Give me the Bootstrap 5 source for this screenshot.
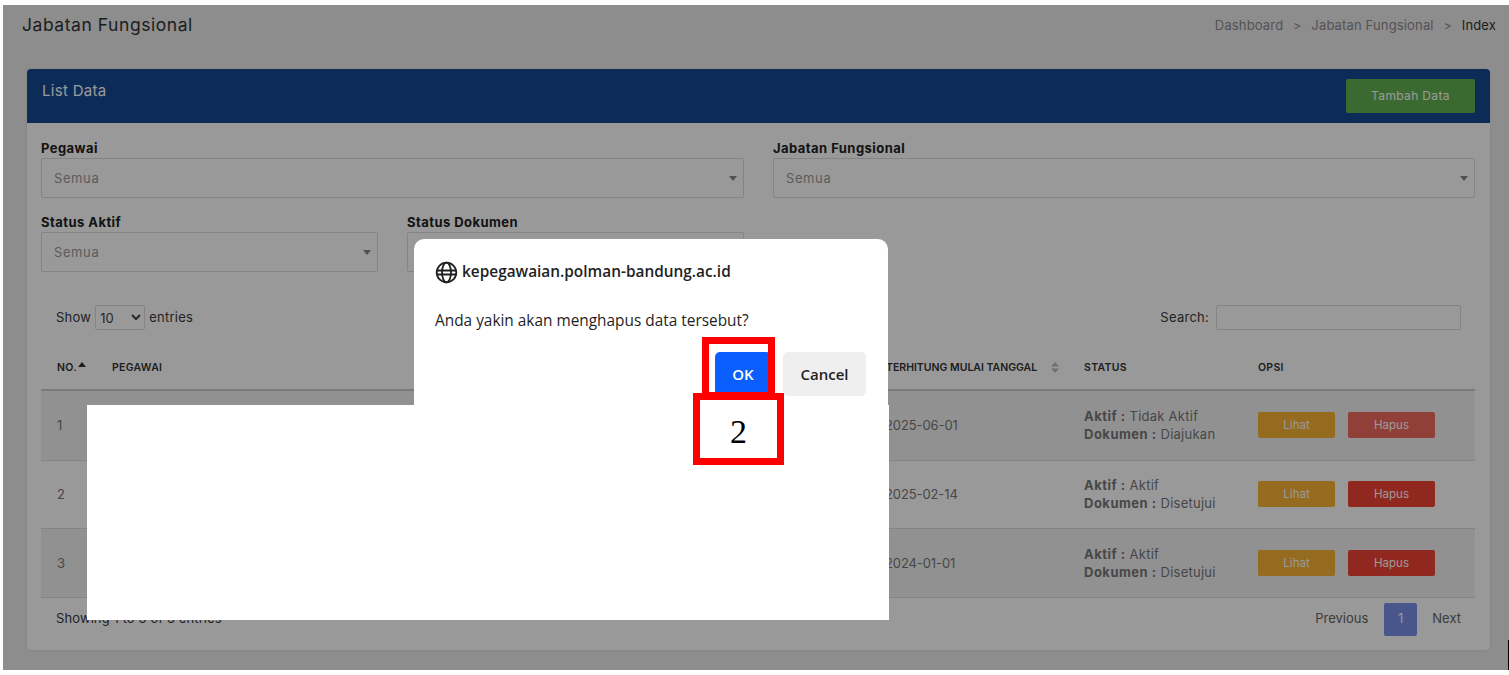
<!DOCTYPE html>
<html lang="id">
<head>
    <meta charset="UTF-8">
    <meta name="viewport" content="width=device-width, initial-scale=1.0">
    <title>Jabatan Fungsional</title>
    <link href="https://cdn.jsdelivr.net/npm/bootstrap@5.3.0/dist/css/bootstrap.min.css" rel="stylesheet">
    <style>
        body {
            background: #fff;
            font-family: "Inter", "Liberation Sans", sans-serif;
            font-size: 13px;
            letter-spacing: .25px;
            color: #3a3a3c;
            overflow: hidden;
        }
        .shot-frame {
            position: relative;
            margin: 5px 0 0 3px;
            width: 1506px;
            height: 665px;
            overflow: hidden;
            background: #ebebec;
        }
        .page-top {
            height: 64px;
            padding: 9px 13px 0 19px;
        }
        .page-heading {
            font-size: 17.5px;
            font-weight: 400;
            letter-spacing: .55px;
            color: #333;
            margin: 0;
            line-height: 21px;
        }
        .crumbs { font-size: 13px; letter-spacing: .15px; color: #8a8a8f; line-height: 21px; margin-top: 1px; }
        .crumbs .sep { margin: 0 10px; font-size: 12px; }
        .crumbs .now { color: #333; }
        .list-box {
            margin-left: 24px;
            width: 1463px;
            height: 581px;
            background: #fff;
            border-radius: 4px;
            box-shadow: 0 0 2px rgba(0,0,0,.12);
        }
        .list-head {
            height: 54px;
            background: #164891;
            border-radius: 4px 4px 0 0;
            padding: 10px 15px 0 15px;
        }
        .list-title { color: #fff; font-size: 15px; letter-spacing: .3px; line-height: 24px; }
        .btn-add {
            width: 129px;
            height: 34px;
            background: #62b150;
            color: #fff;
            font-size: 12px;
            letter-spacing: .35px;
            border: 0;
            border-radius: 2px;
        }
        .filter-area { padding: 16px 15px 0 14px; }
        .filter-grid {
            display: grid;
            grid-template-columns: 337px 337px 702px;
            column-gap: 29px;
        }
        .filter-wide { grid-column: span 2; }
        .filter-label {
            display: block;
            font-weight: 700;
            font-size: 13px;
            letter-spacing: .45px;
            line-height: 19px;
            color: #222;
        }
        .pick-box {
            position: relative;
            height: 40px;
            border: 1px solid #ddd;
            border-radius: 2px;
            color: #999;
            line-height: 38px;
            padding-left: 12px;
            margin-bottom: 15px;
            font-size: 13px;
            letter-spacing: .6px;
        }
        .pick-box::after {
            content: "";
            position: absolute;
            right: 6px;
            top: 17px;
            border: 4px solid transparent;
            border-top: 5px solid #888;
            border-bottom: 0;
        }
        .dt-bar {
            padding: 0 29px;
            height: 25px;
            margin-top: 18px;
        }
        .dt-txt { padding-top: 1px; }
        .dt-size {
            width: 50px;
            height: 25px;
            border: 1px solid #ddd;
            border-radius: 2px;
            margin: 0 4px;
            padding-left: 0;
            font-size: 13px;
            color: #444;
            background: #fff;
        }
        .dt-search {
            width: 245px;
            height: 25px;
            border: 1px solid #ddd;
            border-radius: 2px;
            margin-left: 7px;
        }
        .table-wrap { margin-left: 14px; }
        .data-table {
            table-layout: fixed;
            width: 1434px;
            margin: 12px 0 0 0;
            color: #777;
        }
        .data-table th {
            height: 48px;
            font-size: 10.5px;
            font-weight: 600;
            letter-spacing: .3px;
            color: #333;
            vertical-align: middle;
            padding: 5px 16px 0;
            border-bottom: 2px solid #ccc;
            white-space: nowrap;
        }
        .data-table th.head-date { letter-spacing: 0; }
        .data-table td {
            padding: 0 16px;
            vertical-align: middle;
            border-bottom: 1px solid #ddd;
            font-size: 13px;
            line-height: 18.5px;
        }
        .data-table td b { letter-spacing: .5px; }
        .data-table td.cell-date { letter-spacing: -.1px; padding-left: 15px; }
        .data-table tr.band td { background: #f2f2f2; }
        .data-table tr.row-h3 td { padding-top: 1px; }
        .col-no { width: 55px; }
        .col-peg { width: 392px; }
        .col-jab { width: 382px; }
        .col-tgl { width: 198px; }
        .col-sta { width: 174px; }
        .row-h1 { height: 70px; }
        .row-h2 { height: 68px; }
        .row-h3 { height: 69px; }
        .sort-up { display: inline-block; margin-left: 1px; vertical-align: 4px; }
        .sort-both { display: inline-block; margin-left: 14px; vertical-align: -2px; }
        .act-btn {
            display: inline-block;
            height: 26px;
            line-height: 26px;
            border: 0;
            padding: 0;
            font-size: 11.5px;
            color: #fff;
            text-align: center;
            border-radius: 2px;
        }
        .act-see { width: 77px; background: #f9b234; margin-right: 13px; }
        .act-del { width: 87px; background: #f14336; }
        .act-del.faded { background: #f26a5f; }
        .foot-bar { padding: 5px 29px 0; letter-spacing: .1px; }
        .page-link-txt { color: #666; font-size: 13px; letter-spacing: 0; }
        .page-one {
            width: 33px;
            height: 33px;
            margin: 0 15px 0 16px;
            background: #7a8fe8;
            color: #fff;
            border-radius: 2px;
            font-size: 13px;
        }
        .dim-layer {
            position: absolute;
            inset: 0;
            background: rgba(0,0,0,.4);
        }
        .alert-box {
            position: absolute;
            left: 411px;
            top: 234px;
            width: 474px;
            height: 190px;
            background: #fff;
            border-radius: 10px;
            padding: 21px 22px 21px 21px;
            font-family: "Open Sans", "Noto Sans", sans-serif;
            letter-spacing: 0;
            color: #1f1f1f;
        }
        .alert-origin { font-size: 15.4px; font-weight: 600; line-height: 24px; gap: 4px; }
        .alert-msg { font-size: 15.4px; margin-top: 25px; line-height: 24px; }
        .alert-actions { margin-top: 19px; }
        .alert-ok, .alert-cancel {
            height: 44px;
            border: 0;
            border-radius: 5px;
            font-weight: 600;
            font-size: 15px;
        }
        .alert-ok { width: 56px; background: #0b5fff; color: #fff; }
        .alert-cancel { width: 83px; background: #efefef; color: #1f1f1f; margin-left: 12px; }
        .blank-patch {
            position: absolute;
            left: 84px;
            top: 400px;
            width: 802px;
            height: 215px;
            background: #fff;
        }
        .mark-ok {
            position: absolute;
            left: 699px;
            top: 332px;
            width: 73px;
            height: 62px;
            border: 7px solid #f00;
        }
        .mark-num {
            position: absolute;
            left: 690px;
            top: 388px;
            width: 91px;
            height: 72px;
            border: 7px solid #f00;
            background: #fff;
            font-family: "Liberation Serif", serif;
            font-size: 34px;
            letter-spacing: 0;
            line-height: 64px;
            color: #000;
            text-align: center;
        }
        .edge-line {
            position: absolute;
            right: 0;
            top: 635px;
            width: 1px;
            height: 30px;
            background: #000;
        }
    </style>
</head>
<body>
    <div class="shot-frame">
        <div class="page-top d-flex justify-content-between">
            <h1 class="page-heading">Jabatan Fungsional</h1>
            <div class="crumbs">Dashboard<span class="sep">&gt;</span>Jabatan Fungsional<span class="sep">&gt;</span><span class="now">Index</span></div>
        </div>

        <div class="list-box">
            <div class="list-head d-flex justify-content-between">
                <div class="list-title">List Data</div>
                <button type="button" class="btn-add">Tambah Data</button>
            </div>

            <div class="filter-area">
                <div class="filter-grid">
                    <div class="filter-wide">
                        <label class="filter-label">Pegawai</label>
                        <div class="pick-box">Semua</div>
                    </div>
                    <div>
                        <label class="filter-label">Jabatan Fungsional</label>
                        <div class="pick-box">Semua</div>
                    </div>
                    <div>
                        <label class="filter-label">Status Aktif</label>
                        <div class="pick-box">Semua</div>
                    </div>
                    <div>
                        <label class="filter-label">Status Dokumen</label>
                        <div class="pick-box">Semua</div>
                    </div>
                </div>
            </div>

            <div class="dt-bar d-flex justify-content-between align-items-center">
                <div class="d-flex align-items-center"><span class="dt-txt">Show</span> <select class="dt-size"><option>10</option></select> <span class="dt-txt">entries</span></div>
                <div class="d-flex align-items-center"><span class="dt-txt">Search:</span><input type="text" class="dt-search"></div>
            </div>

            <div class="table-wrap">
                <table class="data-table">
                    <colgroup>
                        <col class="col-no"><col class="col-peg"><col class="col-jab"><col class="col-tgl"><col class="col-sta"><col>
                    </colgroup>
                    <thead>
                        <tr>
                            <th>NO.<svg class="sort-up" width="8" height="5" viewBox="0 0 8 5"><path d="M4 0 8 5H0z" fill="#333"/></svg></th>
                            <th>PEGAWAI</th>
                            <th>JABATAN FUNGSIONAL</th>
                            <th class="head-date">TERHITUNG MULAI TANGGAL<svg class="sort-both" width="8" height="11" viewBox="0 0 8 11"><path d="M4 0 8 4.500H0zM4 11 0 6.500H8z" fill="#bbb"/></svg></th>
                            <th>STATUS</th>
                            <th>OPSI</th>
                        </tr>
                    </thead>
                    <tbody>
                        <tr class="band row-h1">
                            <td>1</td><td></td><td></td><td class="cell-date">2025-06-01</td>
                            <td><b>Aktif :</b> Tidak Aktif<br><b>Dokumen :</b> Diajukan</td>
                            <td><button type="button" class="act-btn act-see">Lihat</button><button type="button" class="act-btn act-del faded">Hapus</button></td>
                        </tr>
                        <tr class="row-h2">
                            <td>2</td><td></td><td></td><td class="cell-date">2025-02-14</td>
                            <td><b>Aktif :</b> Aktif<br><b>Dokumen :</b> Disetujui</td>
                            <td><button type="button" class="act-btn act-see">Lihat</button><button type="button" class="act-btn act-del">Hapus</button></td>
                        </tr>
                        <tr class="band row-h3">
                            <td>3</td><td></td><td></td><td class="cell-date">2024-01-01</td>
                            <td><b>Aktif :</b> Aktif<br><b>Dokumen :</b> Disetujui</td>
                            <td><button type="button" class="act-btn act-see">Lihat</button><button type="button" class="act-btn act-del">Hapus</button></td>
                        </tr>
                    </tbody>
                </table>
            </div>

            <div class="foot-bar d-flex justify-content-between align-items-center">
                <div>Showing 1 to 3 of 3 entries</div>
                <div class="d-flex align-items-center">
                    <span class="page-link-txt">Previous</span>
                    <span class="page-one d-flex align-items-center justify-content-center">1</span>
                    <span class="page-link-txt">Next</span>
                </div>
            </div>
        </div>

        <div class="dim-layer"></div>

        <div class="alert-box">
            <div class="alert-origin d-flex align-items-center">
                <svg width="23" height="23" viewBox="0 0 23 23" fill="none" stroke="#1f1f1f" stroke-width="1.800">
                    <circle cx="11.500" cy="11.500" r="9.800"/>
                    <ellipse cx="11.500" cy="11.500" rx="4.500" ry="9.800"/>
                    <path d="M2 9.500h19M2 13.500h19"/>
                </svg>
                <span>kepegawaian.polman-bandung.ac.id</span>
            </div>
            <div class="alert-msg">Anda yakin akan menghapus data tersebut?</div>
            <div class="alert-actions d-flex justify-content-end">
                <button type="button" class="alert-ok">OK</button>
                <button type="button" class="alert-cancel">Cancel</button>
            </div>
        </div>

        <div class="blank-patch"></div>
        <div class="mark-ok"></div>
        <div class="mark-num">2</div>
        <div class="edge-line"></div>
    </div>

    <script src="https://cdn.jsdelivr.net/npm/bootstrap@5.3.0/dist/js/bootstrap.bundle.min.js"></script>
</body>
</html>
